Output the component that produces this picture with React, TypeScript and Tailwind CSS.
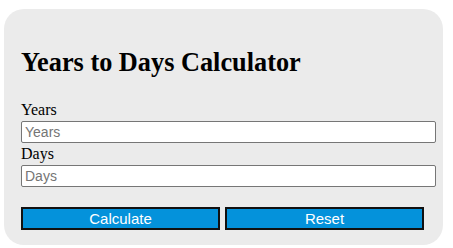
export default function App() {
  return (
    <div className="min-h-screen bg-white">
      <div className="ml-[4px] mt-[9px] h-[236px] w-[439px] rounded-[20px] bg-[#ebebeb] pl-[17px] pt-[39px]">
        <h2 className="font-['Liberation_Serif',serif] text-[26.3px] font-bold leading-[30px] text-black">
          Years to Days Calculator
        </h2>
        <div className="mt-[21px] flex flex-col font-['Liberation_Serif',serif] text-[16px] leading-[22px] text-black">
          <label>Years</label>
          <input
            type="text"
            placeholder="Years"
            className="h-[22px] w-[415px] rounded-[2px] border border-[#767676] bg-white px-[3px] font-['Liberation_Sans',sans-serif] text-[14px] placeholder:text-[#757575]"
          />
          <label>Days</label>
          <input
            type="text"
            placeholder="Days"
            className="h-[22px] w-[415px] rounded-[2px] border border-[#767676] bg-white px-[3px] font-['Liberation_Sans',sans-serif] text-[14px] placeholder:text-[#757575]"
          />
        </div>
        <div className="mt-[20px] flex gap-[5px] font-['Liberation_Sans',sans-serif] text-[15px] text-white">
          <button className="h-[23px] w-[199px] border-2 border-[#111] bg-[#0492db] leading-none">
            Calculate
          </button>
          <button className="h-[23px] w-[199px] border-2 border-[#111] bg-[#0492db] leading-none">
            Reset
          </button>
        </div>
      </div>
    </div>
  );
}
